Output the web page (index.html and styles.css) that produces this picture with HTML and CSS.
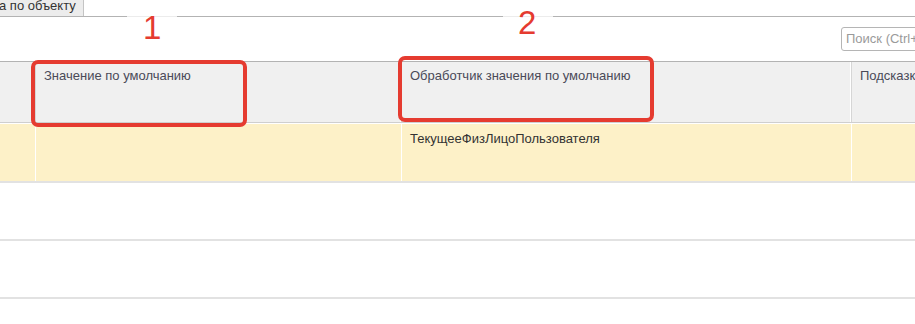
FILE: index.html
```html
<!DOCTYPE html>
<html lang="ru">
<head>
<meta charset="utf-8">
<link rel="stylesheet" href="styles.css">
</head>
<body>
<div class="page">
  <div class="topbar">
    <div class="tab">а по объекту</div>
  </div>
  <div class="toolbar">
    <div class="search">Поиск (Ctrl+F)</div>
  </div>
  <div class="grid">
    <div class="row head">
      <div class="cell c1"></div>
      <div class="cell c2">Значение по умолчанию</div>
      <div class="cell c3">Обработчик значения по умолчанию</div>
      <div class="cell c4">Подсказка</div>
    </div>
    <div class="row sel">
      <div class="cell c1"></div>
      <div class="cell c2"></div>
      <div class="cell c3">ТекущееФизЛицоПользователя</div>
      <div class="cell c4"></div>
    </div>
    <div class="row plain"></div>
    <div class="row plain"></div>
  </div>

  <div class="gap gap1"></div>
  <div class="gap gap2"></div>
  <div class="num num1">1</div>
  <div class="num num2">2</div>
  <div class="mark mark1"></div>
  <div class="mark mark2"></div>
</div>
</body>
</html>
```
FILE: styles.css
```css
html, body {
  margin: 0;
  padding: 0;
  background: #fff;
}
body {
  font-family: "Liberation Sans", Arial, sans-serif;
  font-size: 13px;
  color: #333;
  width: 915px;
  height: 324px;
  overflow: hidden;
}
.page {
  position: relative;
  width: 915px;
  height: 324px;
  overflow: hidden;
}
.topbar {
  height: 16px;
  border-bottom: 1px solid #b3b3b3;
  display: flex;
}
.tab {
  width: 84px;
  height: 16px;
  background: #ececec;
  border-right: 1px solid #c4c4c4;
  box-sizing: border-box;
  line-height: 12px;
  font-size: 13px;
  color: #333;
  white-space: nowrap;
  overflow: hidden;
  text-indent: -1px;
}
.toolbar {
  height: 44px;
  display: flex;
  justify-content: flex-end;
  align-items: flex-start;
  padding-top: 10px;
  box-sizing: border-box;
}
.search {
  margin-right: -80px;
  width: 154px;
  height: 24px;
  box-sizing: border-box;
  border: 1px solid #b5b5b5;
  border-radius: 3px;
  color: #9a9a9a;
  font-size: 13px;
  line-height: 22px;
  padding-left: 4px;
  white-space: nowrap;
  overflow: hidden;
}
.grid {
  border-top: 1px solid #b3b3b3;
}
.row {
  display: flex;
}
.cell {
  box-sizing: border-box;
  white-space: nowrap;
  overflow: hidden;
}
.c1 { width: 36px; }
.c2 { width: 366px; }
.c3 { width: 450px; }
.c4 { flex: 1; }
.head {
  height: 61px;
  box-sizing: border-box;
  background: #f0f0f0;
  border-bottom: 1px solid #cfcfcf;
}
.head .cell {
  height: 60px;
  border-right: 1px solid #d6d6d6;
  box-shadow: inset -1px 0 0 #fff;
  padding: 6px 8px 0 8px;
  line-height: 16px;
  color: #4a4a58;
}
.head .c1 { padding: 0; }
.head .c4 { border-right: none; box-shadow: none; }
.sel {
  height: 57px;
  margin-top: 1px;
  border-bottom: 2px solid #e2e2e2;
}
.sel .cell {
  height: 57px;
  background: #fdf1c8;
  border-right: 1px solid #fff;
  padding: 7px 8px 0 8px;
  line-height: 16px;
  color: #333;
}
.sel .c4 { border-right: none; }
.plain {
  height: 58px;
  border-bottom: 2px solid #e2e2e2;
  box-sizing: border-box;
}

/* annotations */
.gap {
  position: absolute;
  top: 16px;
  height: 1px;
  width: 50px;
  background: #ececec;
}
.gap1 { left: 127px; }
.gap2 { left: 503px; }
.num {
  position: absolute;
  font-family: "Liberation Sans", Arial, sans-serif;
  font-size: 33px;
  line-height: 33px;
  color: #e53b30;
}
.num1 { left: 143px; top: 11px; }
.num2 { left: 518px; top: 6px; }
.mark {
  position: absolute;
  box-sizing: border-box;
  border: 4px solid #e53b30;
  border-radius: 7px;
}
.mark1 { left: 31px; top: 60px; width: 216px; height: 67px; }
.mark2 { left: 398px; top: 56px; width: 256px; height: 66px; }
```
